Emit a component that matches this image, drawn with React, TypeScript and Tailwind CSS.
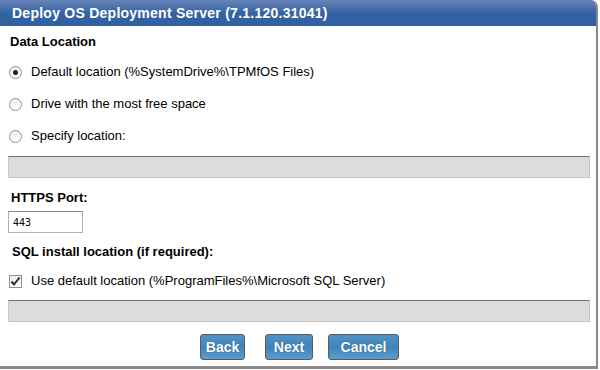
import React from "react";

function Radio({ checked }: { checked?: boolean }) {
  return (
    <span className="flex h-[13px] w-[13px] shrink-0 items-center justify-center rounded-full border border-[#8e8f8f] bg-gradient-to-b from-[#eeeeee] to-[#ffffff]">
      {checked && <span className="h-[5px] w-[5px] rounded-full bg-[#222]" />}
    </span>
  );
}

function Check() {
  return (
    <span className="flex h-[13px] w-[13px] shrink-0 items-center justify-center border border-[#8e8f8f] bg-gradient-to-b from-[#f0f0f0] to-[#ffffff]">
      <svg width="11" height="11" viewBox="0 0 11 11">
        <path d="M1.5 5.5 L4 8.5 L9.5 1.5" fill="none" stroke="#2a2a2a" strokeWidth="2" />
      </svg>
    </span>
  );
}

function Btn({ label, w }: { label: string; w: string }) {
  return (
    <button
      className={`${w} h-[26px] rounded-[3px] border border-[#5a5a5a] bg-gradient-to-b from-[#4f93c7] via-[#3f83ba] to-[#5a9dcf] text-[14px] font-bold text-white [text-shadow:0_0_1px_#1e4f7a]`}
    >
      {label}
    </button>
  );
}

const options = [
  { label: "Default location (%SystemDrive%\\TPMfOS Files)", checked: true },
  { label: "Drive with the most free space" },
  { label: "Specify location:" },
];

export default function App() {
  return (
    <div className="h-[370px] w-[600px] bg-white font-['Liberation_Sans',Arial,sans-serif] text-black">
      <div className="flex h-[369px] w-[598px] flex-col overflow-hidden rounded-tr-[7px] border-b-[3px] border-r-2 border-[#8a8a8a] bg-white">
        <div className="flex h-[26px] shrink-0 items-center bg-gradient-to-b from-[#6683b7] via-[#3463a3] to-[#3060a0] pl-[12px] text-[14px] font-bold tracking-[0.25px] text-white">
          Deploy OS Deployment Server (7.1.120.31041)
        </div>

        <div className="flex flex-col pl-[8px] pr-[7px]">
          <div className="mt-[8px] pl-[2px] text-[13px] font-bold leading-[16px]">Data Location</div>

          <div className="mt-[14px] flex flex-col gap-[16px]">
            {options.map((o) => (
              <div key={o.label} className="flex h-[16px] items-center gap-[9px] pl-[1px] text-[13px]">
                <Radio checked={o.checked} />
                <span>{o.label}</span>
              </div>
            ))}
          </div>

          <div className="mt-[12px] h-[22px] w-[582px] border border-[#c8c8c8] border-t-[#6e6e6e] bg-[#dcdcdc]" />

          <div className="mt-[12px] pl-[3px] text-[13px] font-bold leading-[16px]">HTTPS Port:</div>

          <div className="mt-[5px] flex h-[22px] w-[75px] items-center border border-[#b0b0b0] border-t-[#8a8a8a] pl-[4px] font-['DejaVu_Sans_Mono',monospace] text-[10px]">
            443
          </div>

          <div className="mt-[11px] pl-[4px] text-[13px] font-bold leading-[16px]">
            SQL install location (if required):
          </div>

          <div className="mt-[13px] flex h-[16px] items-center gap-[9px] pl-[1px] text-[13px]">
            <Check />
            <span>Use default location (%ProgramFiles%\Microsoft SQL Server)</span>
          </div>

          <div className="mt-[11px] h-[22px] w-[582px] border border-[#c8c8c8] border-t-[#6e6e6e] bg-[#dcdcdc]" />

          <div className="mt-[12px] flex pl-[192px]">
            <Btn label="Back" w="w-[45px]" />
            <div className="ml-[20px]">
              <Btn label="Next" w="w-[48px]" />
            </div>
            <div className="ml-[15px]">
              <Btn label="Cancel" w="w-[71px]" />
            </div>
          </div>
        </div>
      </div>
    </div>
  );
}
